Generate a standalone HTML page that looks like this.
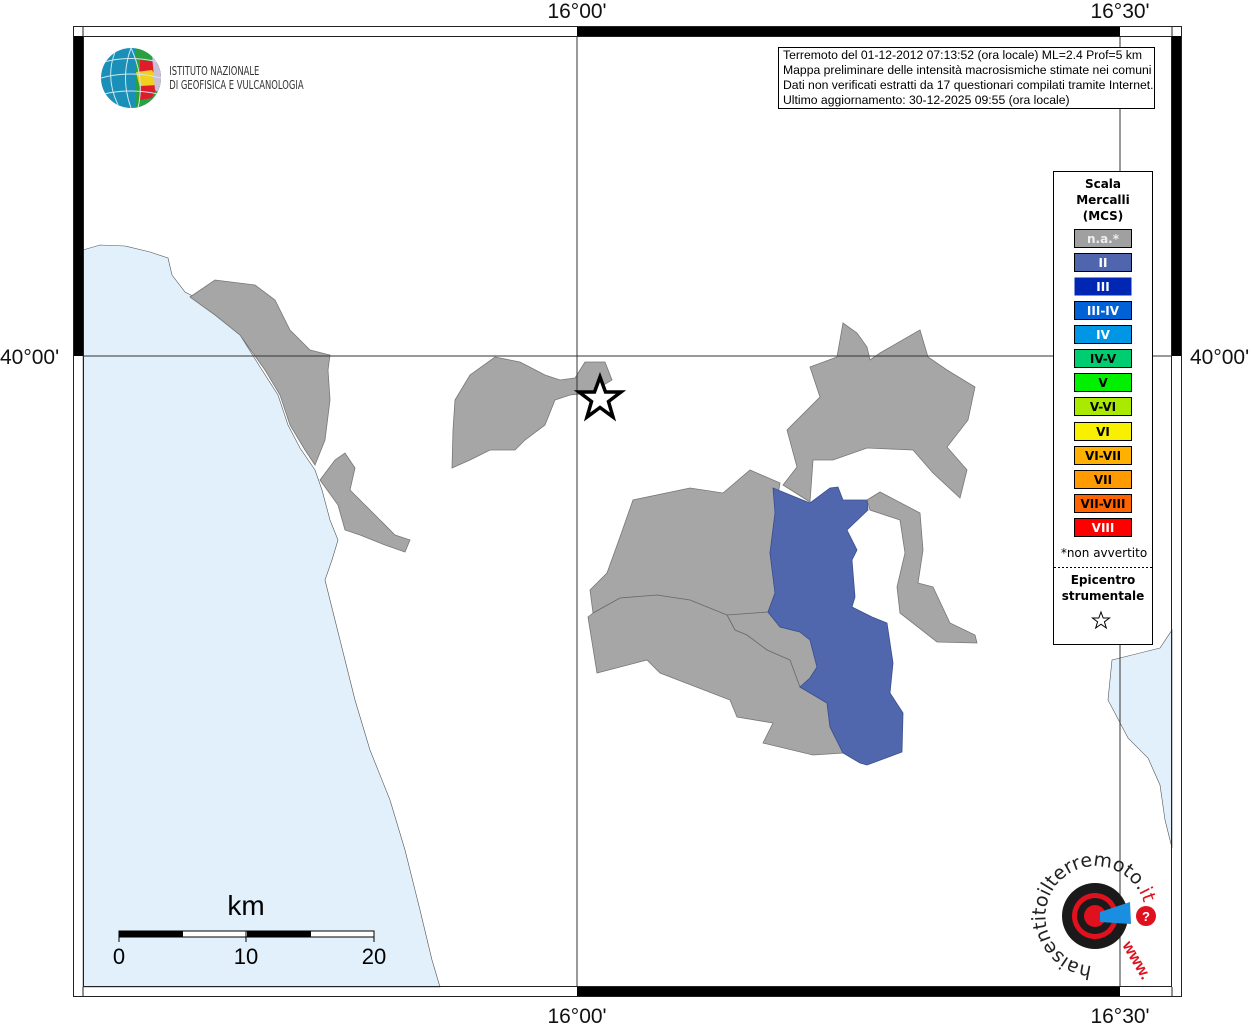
<!DOCTYPE html>
<html><head><meta charset="utf-8"><style>
body{margin:0;background:#fff;width:1255px;height:1024px;overflow:hidden;font-family:"Liberation Sans","DejaVu Sans",sans-serif}
svg{position:absolute;left:0;top:0}
</style></head><body>
<svg width="1255" height="1024" viewBox="0 0 1255 1024" font-family="Liberation Sans, DejaVu Sans, sans-serif">
<rect x="0" y="0" width="1255" height="1024" fill="#fff"/>
<path d="M83,250 L100,245 L125,246 L150,252 L168,258 L172,275 L185,292 L200,300 L215,315 L240,335 L262,370 L278,395 L288,425 L300,448 L315,470 L322,490 L330,520 L338,540 L332,560 L325,580 L335,620 L345,660 L355,700 L370,750 L390,800 L405,850 L420,910 L432,960 L440,987 L83,987 Z" fill="#e1f0fb" stroke="#555" stroke-width="0.6"/>
<path d="M1172,630 L1160,648 L1112,660 L1108,700 L1128,738 L1148,758 L1160,785 L1165,820 L1172,848 Z" fill="#e1f0fb" stroke="#555" stroke-width="0.6"/>
<g fill="#a6a6a6" stroke="#777" stroke-width="0.8">
<path d="M190,297 L215,280 L255,285 L275,300 L290,330 L310,350 L330,355 L328,370 L330,400 L325,440 L315,465 L305,450 L290,425 L280,395 L265,370 L240,335 L215,315 Z"/>
<path d="M320,480 L335,460 L345,453 L355,468 L350,490 L365,505 L380,520 L395,535 L410,540 L405,552 L385,545 L360,535 L345,530 L338,505 Z"/>
<path d="M455,400 L470,375 L495,357 L520,362 L545,375 L560,380 L575,378 L585,362 L605,362 L612,380 L590,393 L570,395 L555,400 L545,425 L525,440 L515,450 L490,450 L470,460 L452,468 L453,430 Z"/>
<path d="M843,323 L857,333 L867,347 L870,360 L880,353 L920,330 L928,357 L947,370 L975,387 L968,420 L947,447 L967,470 L960,498 L933,473 L913,450 L867,448 L833,460 L813,460 L810,502 L783,485 L797,467 L787,430 L820,397 L810,367 L837,357 Z"/>
<path d="M780,483 L750,470 L723,493 L690,488 L633,500 L620,537 L607,573 L590,590 L593,613 L588,617 L597,673 L647,660 L660,673 L730,700 L737,717 L773,723 L763,743 L813,755 L843,753 L830,727 L827,703 L800,687 L810,678 L817,667 L810,640 L800,632 L780,627 L768,612 L775,593 L770,553 L775,513 Z"/>
<path d="M867,500 L880,492 L920,513 L923,550 L918,583 L933,587 L950,623 L975,635 L977,643 L937,642 L900,613 L897,587 L905,553 L900,520 L870,510 Z"/>
</g>
<path d="M593,613 L620,598 L657,595 L690,600 L727,615 L768,612 M727,615 L735,630 L747,635 L767,650 L790,660 L800,687" fill="none" stroke="#666" stroke-width="0.8"/>
<path d="M773,488 L810,503 L830,488 L838,487 L843,500 L867,500 L868,510 L847,530 L857,550 L852,560 L855,597 L852,607 L872,617 L887,623 L893,663 L890,693 L903,713 L902,752 L867,765 L860,763 L843,753 L830,727 L827,703 L800,687 L810,678 L817,667 L810,640 L800,632 L780,627 L768,612 L775,593 L770,553 L775,513 Z" fill="#5067ae" stroke="#3a4f8e" stroke-width="0.8"/>
<g stroke="#333" stroke-width="1" fill="none">
<line x1="577" y1="36" x2="577" y2="987"/>
<line x1="1120" y1="36" x2="1120" y2="987"/>
<line x1="83" y1="356" x2="1172" y2="356"/>
</g>
<rect x="73.5" y="26.5" width="1108" height="970" fill="none" stroke="#222" stroke-width="1"/>
<rect x="83.5" y="36.5" width="1088" height="950" fill="none" stroke="#222" stroke-width="1"/>
<rect x="577" y="27" width="543" height="9" fill="#000"/>
<rect x="577" y="987" width="543" height="9" fill="#000"/>
<rect x="74" y="36" width="9" height="320" fill="#000"/>
<rect x="1172" y="36" width="9" height="320" fill="#000"/>
<line x1="83" y1="26" x2="83" y2="36" stroke="#222"/><line x1="1172" y1="26" x2="1172" y2="36" stroke="#222"/>
<line x1="83" y1="987" x2="83" y2="997" stroke="#222"/><line x1="1172" y1="987" x2="1172" y2="997" stroke="#222"/>
<g font-size="21" fill="#111">
<text x="577" y="18" text-anchor="middle">16°00'</text>
<text x="1120" y="18" text-anchor="middle">16°30'</text>
<text x="577" y="1023" text-anchor="middle">16°00'</text>
<text x="1120" y="1023" text-anchor="middle">16°30'</text>
<text x="0" y="364">40°00'</text>
<text x="1190" y="364">40°00'</text>
</g>
<path d="M600,377 L605.5,392 L621,392 L608.5,401.5 L613,417 L600,407.5 L587,417 L591.5,401.5 L579,392 L594.5,392 Z" fill="#fff" stroke="#000" stroke-width="3.5" stroke-linejoin="miter"/>
<rect x="778.5" y="47.5" width="376" height="61" fill="#fff" stroke="#000" stroke-width="1"/>
<g font-size="12.2" fill="#000">
<text x="783" y="59">Terremoto del 01-12-2012 07:13:52 (ora locale) ML=2.4 Prof=5 km</text>
<text x="783" y="74">Mappa preliminare delle intensità macrosismiche stimate nei comuni</text>
<text x="783" y="89">Dati non verificati estratti da 17 questionari compilati tramite Internet.</text>
<text x="783" y="104">Ultimo aggiornamento: 30-12-2025 09:55 (ora locale)</text>
</g>
<rect x="1053.5" y="171.5" width="99" height="473" fill="#fff" stroke="#000" stroke-width="1"/>
<g font-size="12" font-weight="bold" text-anchor="middle" font-family="DejaVu Sans, sans-serif">
<text x="1103" y="188">Scala</text>
<text x="1103" y="204">Mercalli</text>
<text x="1103" y="220">(MCS)</text>
</g>
<g stroke="#000" stroke-width="1">
<rect x="1074.5" y="229.5" width="57" height="18" fill="#a0a0a0"/>
<rect x="1074.5" y="253.5" width="57" height="18" fill="#4f65ae"/>
<rect x="1074.5" y="277.5" width="57" height="18" fill="#0027b4" stroke="none"/>
<rect x="1074.5" y="301.5" width="57" height="18" fill="#0062d6"/>
<rect x="1074.5" y="325.5" width="57" height="18" fill="#0096e6"/>
<rect x="1074.5" y="349.5" width="57" height="18" fill="#00cc70"/>
<rect x="1074.5" y="373.5" width="57" height="18" fill="#00f000"/>
<rect x="1074.5" y="397.5" width="57" height="18" fill="#aaea00"/>
<rect x="1074.5" y="422.5" width="57" height="18" fill="#f8f000"/>
<rect x="1074.5" y="446.5" width="57" height="18" fill="#ffb000"/>
<rect x="1074.5" y="470.5" width="57" height="18" fill="#ff9a00"/>
<rect x="1074.5" y="494.5" width="57" height="18" fill="#ff6400"/>
<rect x="1074.5" y="518.5" width="57" height="18" fill="#ff0000"/>
</g>
<g font-size="12" font-weight="bold" text-anchor="middle" font-family="DejaVu Sans, sans-serif">
<text x="1103" y="243" fill="#eee">n.a.*</text>
<text x="1103" y="267" fill="#fff">II</text>
<text x="1103" y="291" fill="#fff">III</text>
<text x="1103" y="315" fill="#fff">III-IV</text>
<text x="1103" y="339" fill="#fff">IV</text>
<text x="1103" y="363" fill="#000">IV-V</text>
<text x="1103" y="387" fill="#000">V</text>
<text x="1103" y="411" fill="#000">V-VI</text>
<text x="1103" y="436" fill="#000">VI</text>
<text x="1103" y="460" fill="#000">VI-VII</text>
<text x="1103" y="484" fill="#000">VII</text>
<text x="1103" y="508" fill="#000">VII-VIII</text>
<text x="1103" y="532" fill="#fff">VIII</text>
</g>
<text x="1104" y="557" font-size="12" text-anchor="middle" font-family="DejaVu Sans, sans-serif">*non avvertito</text>
<line x1="1054" y1="567.5" x2="1152" y2="567.5" stroke="#000" stroke-dasharray="2,2"/>
<g font-size="12" font-weight="bold" text-anchor="middle" font-family="DejaVu Sans, sans-serif">
<text x="1103" y="584">Epicentro</text>
<text x="1103" y="600">strumentale</text>
</g>
<path d="M1101,612 L1103.2,618 L1109.5,618 L1104.4,621.8 L1106.3,628 L1101,624.2 L1095.7,628 L1097.6,621.8 L1092.5,618 L1098.8,618 Z" fill="#fff" stroke="#000" stroke-width="1"/>
<text x="246" y="915" font-size="28" text-anchor="middle">km</text>
<rect x="119" y="931" width="255" height="6" fill="#fff" stroke="#000" stroke-width="1"/>
<rect x="119" y="931" width="64" height="6" fill="#000"/>
<rect x="247" y="931" width="64" height="6" fill="#000"/>
<line x1="119" y1="931" x2="119" y2="942" stroke="#000"/><line x1="246" y1="931" x2="246" y2="942" stroke="#000"/><line x1="374" y1="931" x2="374" y2="942" stroke="#000"/>
<g font-size="22" text-anchor="middle"><text x="119" y="964">0</text><text x="246" y="964">10</text><text x="374" y="964">20</text></g>
<defs><clipPath id="gc"><circle cx="131" cy="78" r="30"/></clipPath></defs>
<g clip-path="url(#gc)">
<rect x="100" y="47" width="62" height="62" fill="#1a8fb8"/>
<path d="M135,47 L165,47 L165,110 L135,110 Z" fill="#2aa040"/>
<path d="M140,60 L160,62 L162,75 L140,72 Z" fill="#e01b2a"/>
<path d="M136,72 L152,70 L160,85 L140,88 Z" fill="#f0d020"/>
<path d="M140,86 L158,85 L152,98 L140,100 Z" fill="#e01b2a"/>
<path d="M152,55 L162,60 L162,95 L155,90 Z" fill="#c8c0d8"/>
<path d="M101,78 Q131,70 161,78 M104,62 Q131,55 158,62 M104,94 Q131,88 158,94 M131,48 Q120,78 131,108 M131,48 Q145,78 138,108 M115,52 Q105,78 118,105" fill="none" stroke="#cfe8f0" stroke-width="1"/>
</g>
<g font-size="12" fill="#333" font-family="DejaVu Sans Condensed, DejaVu Sans, sans-serif" transform="scale(0.78,1)">
<text x="217" y="75">ISTITUTO NAZIONALE</text>
<text x="217" y="89">DI GEOFISICA E VULCANOLOGIA</text>
</g>
<defs><path id="arc" d="M1092,966 A50,50 0 1,1 1144,904"/></defs>
<circle cx="1095" cy="916" r="33" fill="#1a1a1a"/>
<circle cx="1095" cy="916" r="23" fill="#e0101e"/>
<circle cx="1095" cy="916" r="18" fill="#1a1a1a"/>
<circle cx="1095" cy="916" r="11" fill="#e0101e"/>
<path d="M1100,912 L1130,902 L1131,924 L1100,922 Z" fill="#1a8ee0"/>
<circle cx="1146" cy="916" r="10" fill="#e0101e"/>
<text x="1146" y="921" font-size="13" font-weight="bold" fill="#fff" text-anchor="middle">?</text>
<text font-size="19" fill="#222" font-family="DejaVu Sans, sans-serif"><textPath href="#arc">haisentitoilterremoto.<tspan fill="#e0101e">it</tspan></textPath></text>
<text x="1122" y="945" font-size="16" fill="#e0101e" font-weight="bold" transform="rotate(60 1122 945)">www.</text>
</svg>
</body></html>
